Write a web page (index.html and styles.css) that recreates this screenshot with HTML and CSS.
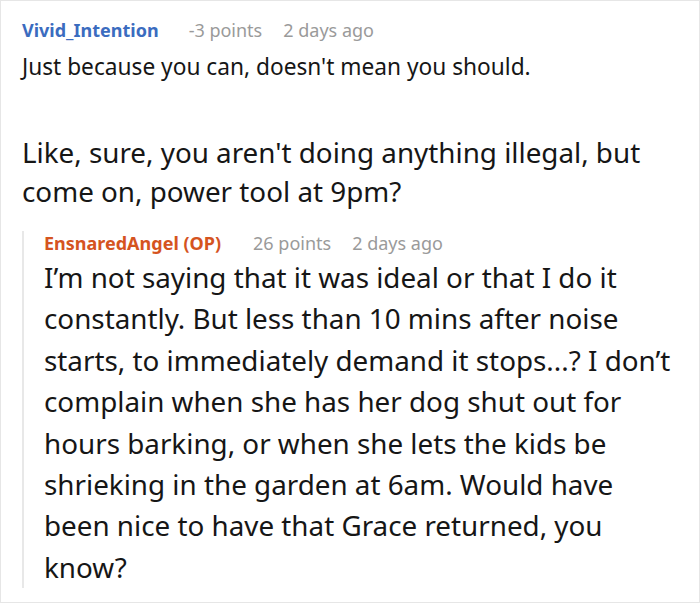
FILE: index.html
```html
<!DOCTYPE html>
<html>
<head>
<meta charset="utf-8">
<link rel="stylesheet" href="styles.css">
</head>
<body>
<div class="frame">
  <div class="comment">
    <div class="meta">
      <span class="author author-blue">Vivid_Intention</span>
      <span class="info">-3 points</span>
      <span class="info">2 days ago</span>
    </div>
    <div class="body">
      <p class="first">Just because you can, doesn't mean you should.</p>
      <p class="second">Like, sure, you aren't doing anything illegal, but come on, power tool at 9pm?</p>
    </div>
    <div class="reply">
      <div class="meta meta-reply">
        <span class="author author-orange">EnsnaredAngel (OP)</span>
        <span class="info">26 points</span>
        <span class="info">2 days ago</span>
      </div>
      <div class="body body-reply">
        <p>I’m not saying that it was ideal or that I do it constantly. But less than 10 mins after noise starts, to immediately demand it stops...? I don’t complain when she has her dog shut out for hours barking, or when she lets the kids be shrieking in the garden at 6am. Would have been nice to have that Grace returned, you know?</p>
      </div>
    </div>
  </div>
</div>
</body>
</html>
```
FILE: styles.css
```css
html, body {
  margin: 0;
  padding: 0;
  background: #ffffff;
}
.frame {
  box-sizing: border-box;
  width: 700px;
  height: 603px;
  border: 1px solid #e6e6e6;
  overflow: hidden;
  font-family: "Noto Sans", "Open Sans", sans-serif;
  color: #161616;
}
.comment {
  padding: 17px 22px 0 21px;
}
.meta {
  display: flex;
  gap: 21px;
  font-size: 18px;
  line-height: 24px;
}
.author {
  font-weight: bold;
  margin-right: 9px;
}
.author-blue { color: #3b6cbf; }
.author-orange {
  color: #d5541f;
  margin-right: 11px;
}
.info { color: #9a9a9a; }
.body p {
  margin: 0;
}
.body .first {
  font-size: 22.7px;
  line-height: 38px;
  margin-top: 6px;
}
.body .second {
  font-size: 27.8px;
  line-height: 39px;
  margin-top: 46.5px;
}
.reply {
  margin-top: 31px;
  border-left: 2px solid #e8e8e8;
  padding-left: 20px;
}
.meta-reply {
  margin-top: -11px;
}
.body-reply {
  font-size: 27.8px;
  line-height: 41.4px;
  margin-top: 2.5px;
  margin-bottom: -4px;
}
```
